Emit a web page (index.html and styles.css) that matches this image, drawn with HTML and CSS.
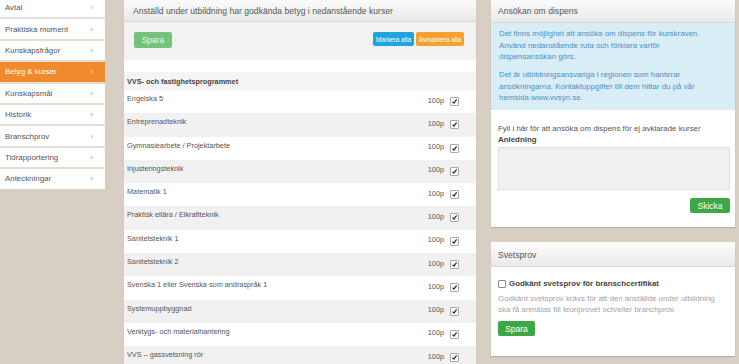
FILE: index.html
```html
<!DOCTYPE html>
<html lang="sv">
<head>
<meta charset="utf-8">
<title>Betyg &amp; kurser</title>
<link rel="stylesheet" href="styles.css">
</head>
<body>
<div class="page">
  <nav class="sidebar">
    <a class="nav-item">Avtal<span class="chev">›</span></a>
    <a class="nav-item">Praktiska moment<span class="chev">›</span></a>
    <a class="nav-item">Kunskapsfrågor<span class="chev">›</span></a>
    <a class="nav-item active">Betyg &amp; kurser<span class="chev">›</span></a>
    <a class="nav-item">Kunskapsmål<span class="chev">›</span></a>
    <a class="nav-item">Historik<span class="chev">›</span></a>
    <a class="nav-item">Branschprov<span class="chev">›</span></a>
    <a class="nav-item">Tidrapportering<span class="chev">›</span></a>
    <a class="nav-item">Anteckningar<span class="chev">›</span></a>
  </nav>

  <section class="main panel">
    <div class="panel-heading">Anställd under utbildning har godkända betyg i nedanstående kurser</div>
    <div class="toolbar">
      <button class="btn btn-save-light">Spara</button>
      <div class="toolbar-right">
        <button class="btn-sm btn-blue">Markera alla</button>
        <button class="btn-sm btn-orange">Avmarkera alla</button>
      </div>
    </div>
    <div class="course-list">
      <div class="course-group">VVS- och fastighetsprogrammet</div>
      <div class="course"><span class="name">Engelska 5</span><span class="pts">100p</span><span class="check"><svg viewBox="0 0 9 9"><path d="M2 4.6 L3.8 6.6 L7.2 1.8" /></svg></span></div>
      <div class="course"><span class="name">Entreprenadteknik</span><span class="pts">100p</span><span class="check"><svg viewBox="0 0 9 9"><path d="M2 4.6 L3.8 6.6 L7.2 1.8" /></svg></span></div>
      <div class="course"><span class="name">Gymnasiearbete / Projektarbete</span><span class="pts">100p</span><span class="check"><svg viewBox="0 0 9 9"><path d="M2 4.6 L3.8 6.6 L7.2 1.8" /></svg></span></div>
      <div class="course"><span class="name">Injusteringsteknik</span><span class="pts">100p</span><span class="check"><svg viewBox="0 0 9 9"><path d="M2 4.6 L3.8 6.6 L7.2 1.8" /></svg></span></div>
      <div class="course"><span class="name">Matematik 1</span><span class="pts">100p</span><span class="check"><svg viewBox="0 0 9 9"><path d="M2 4.6 L3.8 6.6 L7.2 1.8" /></svg></span></div>
      <div class="course"><span class="name">Praktisk ellära / Elkraftteknik</span><span class="pts">100p</span><span class="check"><svg viewBox="0 0 9 9"><path d="M2 4.6 L3.8 6.6 L7.2 1.8" /></svg></span></div>
      <div class="course"><span class="name">Sanitetsteknik 1</span><span class="pts">100p</span><span class="check"><svg viewBox="0 0 9 9"><path d="M2 4.6 L3.8 6.6 L7.2 1.8" /></svg></span></div>
      <div class="course"><span class="name">Sanitetsteknik 2</span><span class="pts">100p</span><span class="check"><svg viewBox="0 0 9 9"><path d="M2 4.6 L3.8 6.6 L7.2 1.8" /></svg></span></div>
      <div class="course"><span class="name">Svenska 1 eller Svenska som andraspråk 1</span><span class="pts">100p</span><span class="check"><svg viewBox="0 0 9 9"><path d="M2 4.6 L3.8 6.6 L7.2 1.8" /></svg></span></div>
      <div class="course"><span class="name">Systemuppbyggnad</span><span class="pts">100p</span><span class="check"><svg viewBox="0 0 9 9"><path d="M2 4.6 L3.8 6.6 L7.2 1.8" /></svg></span></div>
      <div class="course"><span class="name">Verktygs- och materialhantering</span><span class="pts">100p</span><span class="check"><svg viewBox="0 0 9 9"><path d="M2 4.6 L3.8 6.6 L7.2 1.8" /></svg></span></div>
      <div class="course"><span class="name">VVS – gassvetsning rör</span><span class="pts">100p</span><span class="check"><svg viewBox="0 0 9 9"><path d="M2 4.6 L3.8 6.6 L7.2 1.8" /></svg></span></div>
    </div>
  </section>

  <aside class="aside">
    <section class="panel">
      <div class="panel-heading">Ansökan om dispens</div>
      <div class="info">
        <p>Det finns möjlighet att ansöka om dispens för kurskraven.<br>Använd nedanstående ruta och förklara varför<br>dispensansökan görs.</p>
        <p>Det är utbildningsansvariga i regionen som hanterar<br>ansökningarna. Kontaktuppgifter till dem hittar du på vår<br>hemsida www.vvsyn.se.</p>
      </div>
      <div class="form-body">
        <div class="form-text">Fyll i här för att ansöka om dispens för ej avklarade kurser</div>
        <div class="form-label">Anledning</div>
        <div class="textarea"></div>
        <div class="form-actions"><button class="btn btn-green btn-send">Skicka</button></div>
      </div>
    </section>

    <section class="panel panel-weld">
      <div class="panel-heading">Svetsprov</div>
      <div class="weld-body">
        <label class="weld-check"><span class="box"></span>Godkänt svetsprov för branschcertifikat</label>
        <p class="muted">Godkänt svetsprov krävs för att den anställde under utbildning<br>ska få anmälas till teoriprovet och/eller branchprov.</p>
        <button class="btn btn-green btn-weld">Spara</button>
      </div>
    </section>
  </aside>
</div>
</body>
</html>
```

FILE: styles.css
```css
* { box-sizing: border-box; }

html, body {
  margin: 0;
  padding: 0;
}

body {
  background: #d8cfc4;
  font-family: "Liberation Sans", Arial, sans-serif;
  color: #555;
  overflow: hidden;
}

.page {
  display: flex;
  align-items: flex-start;
  margin-top: -2px;
}

/* Sidebar */
.sidebar {
  width: 105px;
  margin-right: 19px;
  display: flex;
  flex-direction: column;
  gap: 2px;
  background: #e4ded6;
}

.nav-item {
  height: 19.4px;
  display: flex;
  align-items: center;
  justify-content: space-between;
  padding: 0 12px 0 5px;
  background: #fff;
  font-size: 7.9px;
  color: #555;
}

.nav-item.active {
  background: #f08a2c;
  color: #fff;
}

.chev {
  font-size: 8px;
  color: #999;
}

.nav-item.active .chev { color: #fde3cc; }

/* Panels */
.panel {
  background: #fff;
  box-shadow: 0 1px 1px rgba(0, 0, 0, 0.15);
}

.panel-heading {
  height: 24px;
  display: flex;
  align-items: center;
  padding: 2px 0 0 9px;
  background: linear-gradient(#fdfdfd, #e9e9e9);
  border-bottom: 1px solid #d6d6d6;
  font-size: 8.6px;
  color: #555;
}

.main {
  width: 352px;
  margin-right: 15px;
}

.toolbar {
  height: 38px;
  background: #f2f2f2;
  display: flex;
  justify-content: space-between;
  align-items: flex-start;
  padding: 10px 12px 0 10px;
}

.btn {
  border: 0;
  font-family: inherit;
  color: #fff;
  font-size: 8.5px;
  padding: 0;
  border-radius: 2px;
}

.btn-save-light {
  width: 38px;
  height: 16px;
  background: #74c27c;
  color: #eaf6eb;
}

.toolbar-right {
  display: flex;
  gap: 2px;
}

.btn-sm {
  border: 0;
  height: 14px;
  padding: 0;
  font-family: inherit;
  font-size: 6.4px;
  color: #fff;
  border-radius: 2px;
}

.btn-blue { width: 41px; background: #1ea5de; }
.btn-orange { width: 48px; background: #f6a12f; }

.course-list {
  padding-top: 12px;
}

.course-group {
  height: 18px;
  background: #f4f4f4;
  padding: 5px 0 0 3px;
  font-size: 7.3px;
  font-weight: bold;
  color: #444;
}

.course {
  height: 23.3px;
  display: flex;
  align-items: flex-start;
  padding: 3px 17px 0 3px;
  font-size: 7.3px;
  line-height: 11px;
  color: #555;
}

.course:nth-child(odd) { background: #f1f1f1; }

.course .name { flex: 1; }

.course .pts {
  margin-top: 1.5px;
  margin-right: 6px;
}

.check {
  width: 9px;
  height: 9px;
  margin-top: 4px;
  background: #fff;
  border: 1px solid #a9a9a9;
  border-radius: 1px;
  display: flex;
}

.check svg {
  width: 100%;
  height: 100%;
  fill: none;
  stroke: #222;
  stroke-width: 1.5;
}

/* Right column */
.aside {
  width: 244px;
  display: flex;
  flex-direction: column;
  gap: 15px;
}

.aside .panel-heading {
  height: 24.7px;
  padding-left: 7px;
}

.info {
  background: #d9edf7;
  padding: 5.5px 8px 6px 8px;
  color: #4a8fc4;
  font-size: 7.9px;
  line-height: 11.6px;
  height: 87.3px;
}

.info p { margin: 0; }
.info p + p { margin-top: 6px; }

.form-body {
  padding: 14px 5px 14px 7px;
  font-size: 7.9px;
  line-height: 10.7px;
}

.form-text { color: #555; }

.form-label {
  font-weight: bold;
  color: #444;
}

.textarea {
  margin-top: 2px;
  height: 43px;
  background: #f0f0f0;
  border: 1px solid #e0e0e0;
}

.form-actions {
  margin-top: 8px;
  display: flex;
  justify-content: flex-end;
}

.btn-green { background: #3ba745; }

.btn-send {
  width: 40px;
  height: 15px;
}

.weld-body {
  padding: 11px 7px 20px 7px;
  font-size: 7.9px;
  line-height: 11px;
}

.weld-check {
  display: flex;
  align-items: center;
  gap: 3px;
  font-weight: bold;
  color: #444;
}

.weld-check .box {
  width: 8px;
  height: 8px;
  border: 1px solid #888;
  border-radius: 1px;
  background: #fff;
}

.muted {
  margin: 5px 0 0 0;
  color: #a3a3a3;
  line-height: 10.7px;
}

.btn-weld {
  margin-top: 6px;
  width: 37px;
  height: 15px;
}
```
